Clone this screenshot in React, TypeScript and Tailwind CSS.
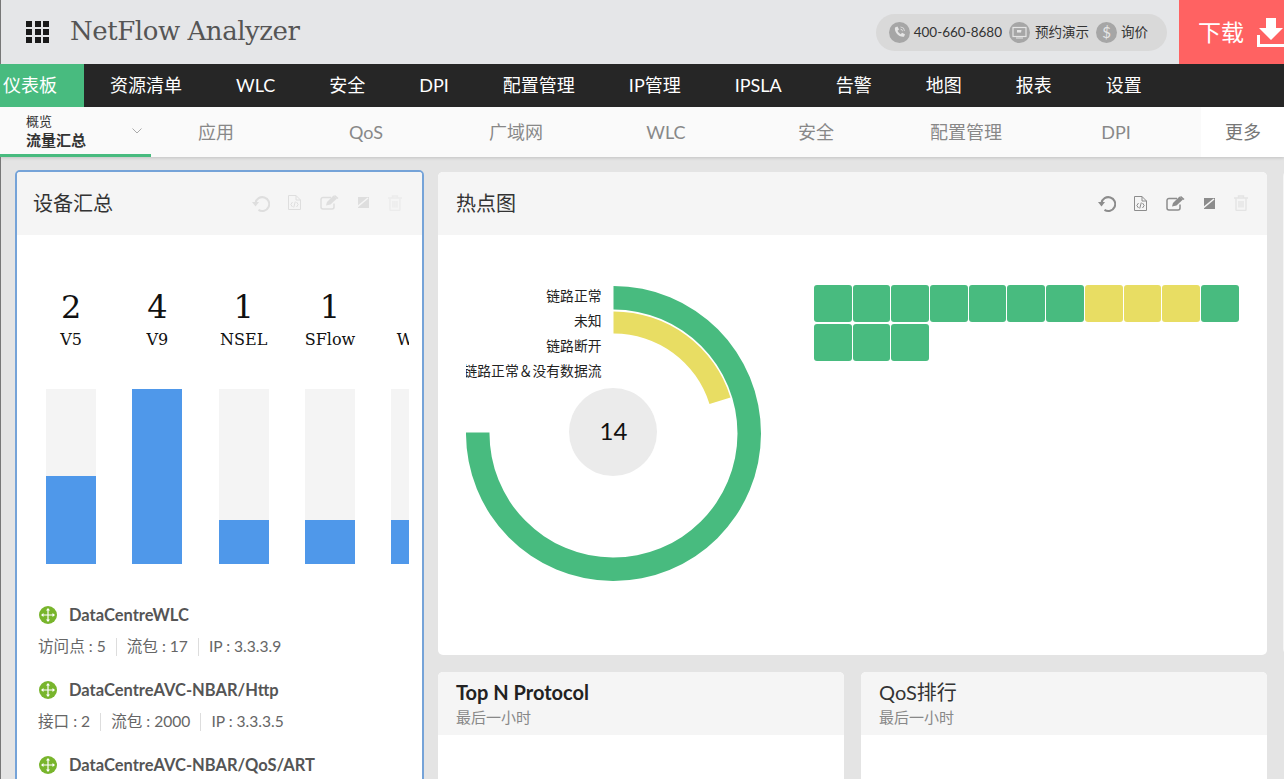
import { Fragment } from 'react'

const lato = "font-['Lato','Noto_Sans_CJK_SC',sans-serif]"

const navItems = ['资源清单', 'WLC', '安全', 'DPI', '配置管理', 'IP管理', 'IPSLA', '告警', '地图', '报表', '设置']
const subTabs = ['应用', 'QoS', '广域网', 'WLC', '安全', '配置管理', 'DPI']
const bars = [
  { value: 2, label: 'V5', fill: 88 },
  { value: 4, label: 'V9', fill: 175 },
  { value: 1, label: 'NSEL', fill: 44 },
  { value: 1, label: 'SFlow', fill: 44 },
  { value: 1, label: 'WLC', fill: 44 },
]
const devices = [
  { name: 'DataCentreWLC', stats: ['访问点 : 5', '流包 : 17', 'IP : 3.3.3.9'] },
  { name: 'DataCentreAVC-NBAR/Http', stats: ['接口 : 2', '流包 : 2000', 'IP : 3.3.3.5'] },
  { name: 'DataCentreAVC-NBAR/QoS/ART', stats: ['接口 : 2', '流包 : 2000', 'IP : 3.3.3.6'] },
]
const heat = ['g', 'g', 'g', 'g', 'g', 'g', 'g', 'y', 'y', 'y', 'g', 'g', 'g', 'g']

function ToolIcons({ faded }: { faded?: boolean }) {
  const c = faded ? '#dedede' : '#8c8c8c'
  return (
    <div className="flex items-center">
      {/* 刷新 */}
      <svg width="18" height="18" viewBox="0 0 18 18" fill="none" stroke={c} strokeWidth="2">
        <path d="M3.500 9A6.900 6.900 0 1 1 6.500 15.800" />
        <path d="M0 8h7l-3.500 4.500z" fill={c} stroke="none" />
      </svg>
      {/* 文件 */}
      <svg width="13" height="15" viewBox="0 0 13 15" fill="none" stroke={c} strokeWidth="1" className="ml-[18px]">
        <path d="M.5.500h7.500l4.500 4.500v9.500H.5z" />
        <path d="M8 .5v4.500h4.500M4.500 7 2.800 9.500 4.500 12M8.500 7l1.700 2.500L8.500 12M7.300 6.500 5.700 12.500" />
      </svg>
      {/* 编辑 */}
      <svg width="19" height="15" viewBox="0 0 19 15" fill="none" stroke={c} strokeWidth="1.500" className="ml-[19px]">
        <path d="M14 8.500V12a2 2 0 0 1-2 2H3a2 2 0 0 1-2-2V4.500a2 2 0 0 1 2-2h8" />
        <path d="M6 10.500 7 7l6.500-6.500 3.500 3L10.500 9.500z" fill={c} stroke="none" />
        <path d="M15 0l3.500 3-1 1L14 1z" fill={c} stroke="none" />
      </svg>
      {/* 展开 */}
      <svg width="11" height="11" viewBox="0 0 11 11" fill={c} className="ml-[19px]">
        <path d="M0 0h11v11H0z" />
        <path d="M-1 10 10 1" stroke="#f5f5f5" strokeWidth="1.500" />
      </svg>
      {/* 删除 */}
      <svg width="14" height="16" viewBox="0 0 14 16" fill="none" stroke={faded ? '#ececec' : '#e4e4e4'} strokeWidth="1.400" className="ml-[19px]">
        <path d="M0 3h14M4.500 3V1h5v2M2 3v11.500a1 1 0 0 0 1 1h8a1 1 0 0 0 1-1V3M5 6v6.500M7 6v6.500M9 6v6.500" />
      </svg>
    </div>
  )
}

function DeviceIcon() {
  return (
    <svg width="18" height="18" viewBox="0 0 18 18" className="shrink-0">
      <circle cx="9" cy="9" r="9" fill="#78b52c" />
      <path d="M9 3v12M3 9h12" stroke="#fff" strokeWidth="1.200" />
      <path d="M9 2 7 4.500h4zM9 16l-2-2.500h4zM2 9l2.500-2v4zM16 9l-2.500-2v4z" fill="#fff" />
    </svg>
  )
}

function RingChart() {
  // 中心 (147.5,147.5)，环形起点在正上方
  const labels = ['链路正常', '未知', '链路断开', '链路正常＆没有数据流']
  return (
    <svg width="300" height="300" viewBox="0 0 300 300" className="shrink-0">
      <path d="M147.500 0A147.500 147.500 0 1 1 0 146.500H23.500A124 124 0 1 0 147.500 23.500Z" fill="#48bb7f" />
      <path d="M147.500 25.500A122 122 0 0 1 264.500 111.500L243.500 118A100 100 0 0 0 147.500 47.500Z" fill="#e8dd63" />
      <circle cx="147" cy="146" r="44" fill="#ebebeb" />
      <text x="147.500" y="154" textAnchor="middle" fontSize="24" fill="#111" fontFamily="Lato, sans-serif">14</text>
      {labels.map((l, i) => (
        <text key={l} x="135.500" y={15 + i * 25} textAnchor="end" fontSize="13.800" fill="#222" fontFamily="'Noto Sans CJK SC', sans-serif">
          {l}
        </text>
      ))}
    </svg>
  )
}

export default function App() {
  return (
    <div className={`h-[779px] w-[1284px] overflow-hidden bg-[#e4e4e4] ${lato}`}>
      {/* 顶部栏 */}
      <header className="flex h-16 items-center border-l border-[#777] bg-[#e5e6e8] pl-[25px]">
        <div className="grid w-6 grid-cols-3 gap-[2px]">
          {Array.from({ length: 9 }).map((_, i) => (
            <span key={i} className="h-[6px] w-[6px] bg-[#1a1a1a]" />
          ))}
        </div>
        <h1 className="mb-[2px] ml-[20px] font-['DejaVu_Serif',serif] text-[26px] leading-none font-light tracking-[-0.45px] text-[#555]">NetFlow Analyzer</h1>
        <div className="mr-3 ml-auto flex h-[37px] items-center rounded-full bg-[#d9d9d9] pr-[19px] pl-[13px] text-[13.500px] text-[#333]">
          <span className="flex items-center gap-[4px]">
            <svg width="21" height="21" viewBox="0 0 21 21">
              <circle cx="10.500" cy="10.500" r="10.500" fill="#a6a6a6" />
              <path d="M6 5.500l2.500-1 1.500 3-1.500 1.200c.6 1.500 1.800 2.800 3.300 3.500l1.200-1.500 3 1.500-1 2.500c-5 .8-10-4.500-9-9.500z" fill="#e5e5e5" />
              <path d="M11.500 5a4 4 0 0 1 4 4M11.500 7.200a2 2 0 0 1 2 2" fill="none" stroke="#e5e5e5" strokeWidth=".8" />
            </svg>
            400-660-8680
          </span>
          <span className="ml-[7px] flex items-center gap-[5px]">
            <svg width="21" height="21" viewBox="0 0 21 21">
              <circle cx="10.500" cy="10.500" r="10.500" fill="#a6a6a6" />
              <rect x="4" y="5.500" width="13" height="9" fill="none" stroke="#e5e5e5" strokeWidth="1.200" />
              <path d="M7 16h7" stroke="#e5e5e5" />
              <path d="M8 8h4.500l-.5 2.500H8z" fill="#e5e5e5" />
            </svg>
            预约演示
          </span>
          <span className="ml-[7px] flex items-center gap-[4px]">
            <span className="flex h-[21px] w-[21px] items-center justify-center rounded-full bg-[#a6a6a6] text-[15px] leading-none text-[#e5e5e5]">$</span>
            询价
          </span>
        </div>
        <div className="flex h-16 w-[105px] shrink-0 items-center overflow-hidden bg-[#ff6262] pl-[19px] text-[22px] whitespace-nowrap text-white">
          <span className="text-[23px]">下载</span>
          <svg width="30" height="30" viewBox="0 0 30 30" className="ml-[13px] shrink-0" fill="#fff">
            <path d="M9 1h10v10h7L14 23 2 11h7z" />
            <path d="M1.500 18v10.500H30" fill="none" stroke="#fff" strokeWidth="3" />
          </svg>
        </div>
      </header>

      {/* 主导航 */}
      <nav className="flex h-[43px] items-center bg-[#262626] text-[18px] text-white">
        <span className="flex h-full items-center bg-[#48bb7f] pr-[27px] pl-[3px]">仪表板</span>
        <div className="ml-[26px] flex gap-[54px]">
          {navItems.map((n) => (
            <span key={n}>{n}</span>
          ))}
        </div>
      </nav>

      {/* 子导航 */}
      <div className="flex h-[50px] items-stretch bg-[#fafafa] shadow-[0_1px_3px_rgba(0,0,0,0.15)]">
        <div className="relative -mr-[10px] flex w-[151px] shrink-0 items-center justify-between border-b-[3px] border-[#48bb7f] pr-[9px] pl-[26px]">
          <div className="text-[#333]">
            <div className="text-[13px] leading-[18px]">概览</div>
            <div className="text-[15px] leading-[20px] font-bold">流量汇总</div>
          </div>
          <svg width="10" height="6" viewBox="0 0 10 6" fill="none" stroke="#aaa">
            <path d="M.5.500 5 5 9.500.500" />
          </svg>
        </div>
        {subTabs.map((t, i) => (
          <span key={i} className="flex w-[150px] shrink-0 items-center justify-center text-[18px] text-[#888]">{t}</span>
        ))}
        <span className="ml-auto flex w-[83px] items-center justify-center bg-white pl-px text-[18px] text-[#777]">更多</span>
      </div>

      {/* 内容区 */}
      <main className="flex items-start gap-[14px] border-l border-[#777] pt-[14px] pl-[14px]">
        <section className="-mt-px h-[641px] w-[409px] shrink-0 overflow-hidden rounded-[5px] border-2 border-[#75a3d8] bg-white">
          <div className="flex h-[63px] items-center justify-between bg-[#f5f5f5] pr-[20px] pb-[2px] pl-[16px]">
            <h2 className="text-[20px] text-[#333]">设备汇总</h2>
            <ToolIcons faded />
          </div>
          <div className="mt-[52px] ml-[6px] w-[386px] overflow-hidden">
            <div className="flex w-[520px]">
              {bars.map((b) => (
                <div key={b.label} className="flex w-[86.300px] shrink-0 flex-col items-center pr-[4px] pl-[14px]">
                  <div className="w-[68px] text-center font-['DejaVu_Serif',serif] text-[#111]">
                    <div className="text-[32px] leading-[40px]">{b.value}</div>
                    <div className="mt-px text-[16px] leading-[24px] whitespace-nowrap">{b.label}</div>
                  </div>
                  <div className="mt-[37px] flex h-[175px] w-[50px] items-end bg-[#f4f4f4]">
                    <div className="w-full bg-[#4f98ea]" style={{ height: b.fill }} />
                  </div>
                </div>
              ))}
            </div>
          </div>
          <ul className="mt-[41px] space-y-[23px] pl-[22px]">
            {devices.map((d) => (
              <li key={d.name}>
                <div className="flex h-[20px] items-center gap-[12px] text-[16.500px] font-bold whitespace-nowrap text-[#555]">
                  <DeviceIcon />
                  {d.name}
                </div>
                <div className="mt-[12px] -ml-px flex h-[20px] items-center text-[15.600px] text-[#666]">
                  {d.stats.map((s, i) => (
                    <Fragment key={s}>
                      {i > 0 && <span className="mx-[10px] h-[18px] w-px bg-[#ddd]" />}
                      <span>{s}</span>
                    </Fragment>
                  ))}
                </div>
              </li>
            ))}
          </ul>
        </section>

        <div className="w-[829px] shrink-0 pt-px">
          <section className="h-[483px] overflow-hidden rounded-[5px] bg-white">
            <div className="flex h-[63px] items-center justify-between bg-[#f5f5f5] pr-[19px] pb-px pl-[18px]">
              <h2 className="text-[20px] text-[#333]">热点图</h2>
              <ToolIcons />
            </div>
            <div className="flex pt-[51px] pl-[28px]">
              <RingChart />
              <div className="mt-[-1px] ml-[48px] flex h-[80px] w-[430px] flex-wrap content-start gap-x-[1px] gap-y-[2px]">
                {heat.map((h, i) => (
                  <span key={i} className={h === 'g' ? 'h-[37px] w-[37.700px] rounded-[3px] bg-[#48bb7f]' : 'h-[37px] w-[37.700px] rounded-[3px] bg-[#e8dd63]'} />
                ))}
              </div>
            </div>
          </section>
          <div className="mt-[17px] flex gap-[17px]">
            {[
              { title: 'Top N Protocol', bold: true },
              { title: 'QoS排行', bold: false },
            ].map((c) => (
              <section key={c.title} className="h-[120px] w-[406px] overflow-hidden rounded-[5px] bg-white">
                <div className="h-[63px] bg-[#f5f5f5] pt-[7px] pl-[18px]">
                  <h3 className={c.bold ? 'text-[20px] leading-[26px] font-bold text-[#222]' : 'text-[20px] leading-[26px] text-[#333]'}>{c.title}</h3>
                  <p className="mt-[3px] text-[15px] leading-[18px] text-[#888]">最后一小时</p>
                </div>
              </section>
            ))}
          </div>
        </div>

        {/* 右侧露出的下一张卡片 */}
        <section className="ml-[2px] h-[483px] w-[20px] shrink-0 rounded-[5px] bg-[#f5f5f5]" />
      </main>
    </div>
  )
}
